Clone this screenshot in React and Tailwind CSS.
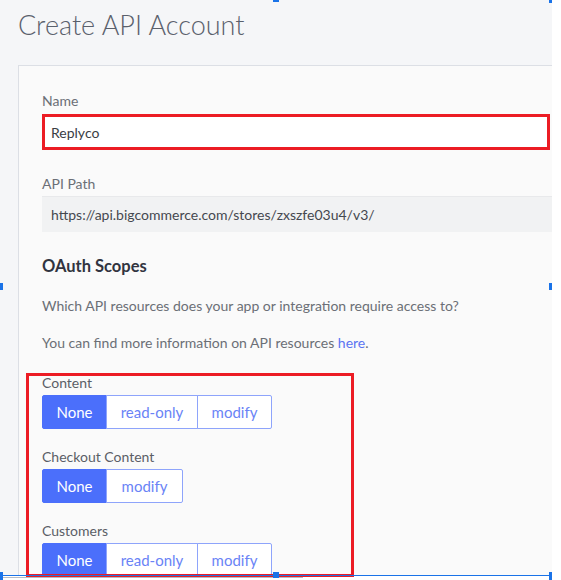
import React from "react";

function Seg({ options, widths }) {
  return (
    <div className="flex h-[34px]">
      {options.map((o, i) => (
        <div
          key={o}
          className={
            "flex items-center justify-center text-[15px] border " +
            (i === 0
              ? "bg-[#4b6ffb] border-[#4b6ffb] text-white rounded-l-[2px]"
              : "bg-white border-[#8ea4fb] text-[#6a83f6] -ml-px") +
            (i === options.length - 1 ? " rounded-r-[2px]" : "")
          }
          style={{ width: widths[i] }}
        >
          {o}
        </div>
      ))}
    </div>
  );
}

function Field({ label, children }) {
  return (
    <div className="flex flex-col gap-[2px]">
      <div className="text-[14px] leading-[20px] text-[#5a5e66]">{label}</div>
      {children}
    </div>
  );
}

export default function App() {
  return (
    <div className="relative w-[561px] h-[580px] bg-white overflow-hidden" style={{ fontFamily: "Lato, 'Noto Sans', sans-serif" }}>
      <div className="w-[552px] h-[575px] bg-[#f5f6f8] overflow-hidden pl-[18px] flex flex-col gap-[20px]">
        <h1 className="pt-[5px] text-[27px] leading-[40px] font-light text-[#5a606c]">Create API Account</h1>
        <div className="w-[600px] h-[600px] border-l border-t border-[#dcdfe5] bg-[#fafafa] pl-[23px] pt-[25px] flex flex-col">
          <div className="text-[14px] leading-[20px] text-[#6b6f76]">Name</div>
          <div className="mt-[3px] w-[508px] h-[36px] border-[3px] border-[#ec1c24] bg-white flex items-center pl-[6px] text-[14px] text-[#3a3d44]">Replyco</div>
          <div className="mt-[24px] text-[14px] leading-[20px] text-[#6b6f76]">API Path</div>
          <div className="mt-[2px] h-[36px] bg-[#f1f2f3] border-t border-[#e8e9eb] flex items-center pl-[9px] text-[14px] text-[#45484f]">https://api.bigcommerce.com/stores/zxszfe03u4/v3/</div>
          <div className="mt-[22px] text-[16.5px] leading-[24px] font-bold text-[#313440]">OAuth Scopes</div>
          <div className="mt-[18px] text-[14px] leading-[20px] text-[#6b6f76]">Which API resources does your app or integration require access to?</div>
          <div className="mt-[17px] text-[14px] leading-[20px] text-[#6b6f76]">
            You can find more information on API resources <span className="text-[#5b74f2]">here</span>.
          </div>
          <div className="mt-[20px] flex flex-col gap-[18px]">
            <Field label="Content"><Seg options={["None", "read-only", "modify"]} widths={[65, 92, 75]} /></Field>
            <Field label="Checkout Content"><Seg options={["None", "modify"]} widths={[65, 77]} /></Field>
            <Field label="Customers"><Seg options={["None", "read-only", "modify"]} widths={[65, 92, 75]} /></Field>
          </div>
        </div>
      </div>
      {/* red annotation box */}
      <div className="absolute left-[26px] top-[373px] w-[328px] h-[204px] border-[3px] border-[#ec1c24]" />
      {/* selection frame */}
      <div className="absolute left-0 top-[575px] w-[552px] h-px bg-[#1a73e8]" />
      <div className="absolute left-[3px] top-[577px] w-[300px] h-px bg-[#b8bcc4]" />
      <div className="absolute left-0 top-[572px] w-[3px] h-[8px] bg-[#1a73e8]" />
      <div className="absolute left-[273px] top-[572px] w-[6px] h-[6px] bg-[#1a73e8]" />
      <div className="absolute left-[549px] top-[572px] w-[3px] h-[8px] bg-[#1a73e8]" />
      <div className="absolute left-[273px] top-0 w-[6px] h-[2px] bg-[#1a73e8]" />
      <div className="absolute left-[549px] top-0 w-[3px] h-[3px] bg-[#1a73e8]" />
      <div className="absolute left-0 top-[283px] w-[3px] h-[7px] bg-[#1a73e8]" />
      <div className="absolute left-[549px] top-[283px] w-[3px] h-[7px] bg-[#1a73e8]" />
    </div>
  );
}
